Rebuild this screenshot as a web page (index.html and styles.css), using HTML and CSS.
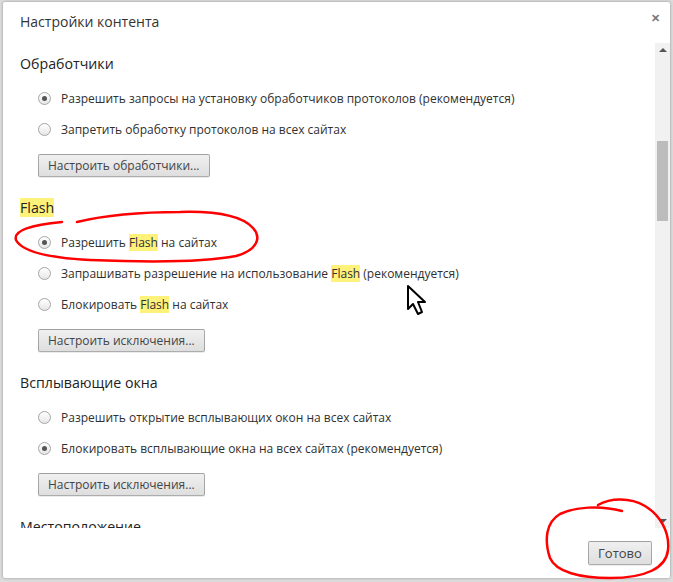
FILE: index.html
```html
<!DOCTYPE html>
<html lang="ru">
<head>
    <meta charset="UTF-8">
    <title>Настройки контента</title>
    <link rel="stylesheet" href="styles.css">
</head>
<body>

    <!-- Dialog -->
    <div class="dialog">
        <div class="dialog-header">
            <h1>Настройки контента</h1>
            <span class="close-btn">&#x2715;</span>
        </div>

        <div class="dialog-body">
            <div class="content">
                <section class="group">
                    <h3>Обработчики</h3>
                    <div class="options">
                        <label class="option"><span class="radio checked"></span>Разрешить запросы на установку обработчиков протоколов (рекомендуется)</label>
                        <label class="option"><span class="radio"></span>Запретить обработку протоколов на всех сайтах</label>
                    </div>
                    <button class="btn">Настроить обработчики...</button>
                </section>

                <section class="group">
                    <h3><mark>Flash</mark></h3>
                    <div class="options">
                        <label class="option"><span class="radio checked"></span>Разрешить&nbsp;<mark>Flash</mark>&nbsp;на сайтах</label>
                        <label class="option"><span class="radio"></span>Запрашивать разрешение на использование&nbsp;<mark>Flash</mark>&nbsp;(рекомендуется)</label>
                        <label class="option"><span class="radio"></span>Блокировать&nbsp;<mark>Flash</mark>&nbsp;на сайтах</label>
                    </div>
                    <button class="btn">Настроить исключения...</button>
                </section>

                <section class="group">
                    <h3>Всплывающие окна</h3>
                    <div class="options">
                        <label class="option"><span class="radio"></span>Разрешить открытие всплывающих окон на всех сайтах</label>
                        <label class="option"><span class="radio checked"></span>Блокировать всплывающие окна на всех сайтах (рекомендуется)</label>
                    </div>
                    <button class="btn">Настроить исключения...</button>
                </section>

                <section class="group">
                    <h3>Местоположение</h3>
                </section>
            </div>

            <!-- Scrollbar -->
            <div class="scrollbar">
                <div class="arrow arrow-up"></div>
                <div class="track"><div class="thumb"></div></div>
                <div class="arrow arrow-down"></div>
            </div>
        </div>

        <div class="dialog-footer">
            <button class="btn btn-done">Готово</button>
        </div>
    </div>

    <!-- Red marks drawn over the screenshot -->
    <svg class="marks" width="673" height="582" viewBox="0 0 673 582">
        <path d="M77 222 C110 214 145 212 180 212 C215 211 242 216 253 228 C262 238 257 250 236 256 C200 263 140 262 90 260 C52 258 22 252 16 240 C13 230 32 225 62 222"
              fill="none" stroke="#ff0000" stroke-width="2.5" stroke-linecap="round"/>
        <path d="M598 505 C610 498 630 497 645 506 C660 515 670 532 668 550 C666 568 646 578 610 578 C580 578 556 572 550 558 C544 540 546 522 560 514 C575 507 600 505 622 511"
              fill="none" stroke="#ff0000" stroke-width="2.5" stroke-linecap="round"/>
        <!-- mouse cursor -->
        <path d="M408 286 L408 309 L413 304 L418 314 L422 312 L418 302 L425 302 Z"
              fill="#fff" stroke="#000" stroke-width="2" stroke-linejoin="round"/>
    </svg>

</body>
</html>
```

FILE: styles.css
```css
/* Reset */
* {
    margin: 0;
    padding: 0;
    box-sizing: border-box;
}

body {
    width: 673px;
    height: 582px;
    overflow: hidden;
    background-color: #dcdcdc;
    font-family: "Open Sans", "Noto Sans", sans-serif;
    font-size: 12px;
    color: #303030;
    position: relative;
}

/* Dialog box */
.dialog {
    margin: 2px 3px 0 3px;
    width: 667px;
    height: 576px;
    background-color: #fff;
    border-radius: 2px;
    box-shadow: 0 0 3px rgba(0, 0, 0, 0.35);
    display: flex;
    flex-direction: column;
}

.dialog-header {
    height: 41px;
    display: flex;
    justify-content: space-between;
    align-items: flex-start;
    padding: 10px 10px 0 17px;
}

.dialog-header h1 {
    font-size: 14px;
    font-weight: normal;
    line-height: 20px;
    color: #333;
}

.close-btn {
    font-size: 11px;
    font-weight: bold;
    color: #777;
    line-height: 12px;
}

/* Scrolling area */
.dialog-body {
    height: 485px;
    display: flex;
}

.content {
    flex: 1;
    overflow: hidden;
    padding: 11px 0 0 17px;
}

.group {
    padding-bottom: 21px;
}

.group h3 {
    font-size: 14.2px;
    font-weight: normal;
    line-height: 20px;
    color: #222;
}

mark {
    background-color: #fff27a;
    color: inherit;
}

.options {
    padding: 9px 0 0 18px;
}

.option {
    display: flex;
    align-items: center;
    height: 31px;
    white-space: nowrap;
}

.radio {
    width: 13px;
    height: 13px;
    border-radius: 50%;
    border: 1px solid #a6a6a6;
    background: linear-gradient(#ffffff, #e6e6e6);
    margin-right: 10px;
    display: flex;
    align-items: center;
    justify-content: center;
    flex-shrink: 0;
}

.radio.checked::after {
    content: "";
    width: 5px;
    height: 5px;
    border-radius: 50%;
    background-color: #555;
}

/* Buttons */
.btn {
    font-family: "Open Sans", "Noto Sans", sans-serif;
    font-size: 12px;
    color: #444;
    height: 23px;
    padding: 0 9px;
    margin: 9px 0 0 18px;
    border: 1px solid rgba(0, 0, 0, 0.28);
    border-radius: 2px;
    background: linear-gradient(#f0f0f0, #dedede);
    box-shadow: 0 1px 0 rgba(0, 0, 0, 0.08);
    cursor: pointer;
}

/* Scrollbar */
.scrollbar {
    width: 15px;
    background-color: #f1f1f1;
    display: flex;
    flex-direction: column;
}

.arrow {
    height: 14px;
    display: flex;
    align-items: center;
    justify-content: center;
}

.arrow-up::after,
.arrow-down::after {
    content: "";
    border-left: 4px solid transparent;
    border-right: 4px solid transparent;
}

.arrow-up::after {
    border-bottom: 4px solid #555;
}

.arrow-down::after {
    border-top: 4px solid #555;
}

.track {
    flex: 1;
    padding: 0 2px;
}

.thumb {
    margin-top: 84px;
    height: 80px;
    background-color: #bcbcbc;
}

/* Footer */
.dialog-footer {
    flex: 1;
    display: flex;
    justify-content: flex-end;
    align-items: flex-start;
    padding: 13px 18px 0 0;
}

.btn-done {
    margin: 0;
    height: 24px;
    width: 64px;
    padding: 0;
    font-size: 13px;
}

/* Annotation layer */
.marks {
    position: absolute;
    top: 0;
    left: 0;
    pointer-events: none;
}
```
